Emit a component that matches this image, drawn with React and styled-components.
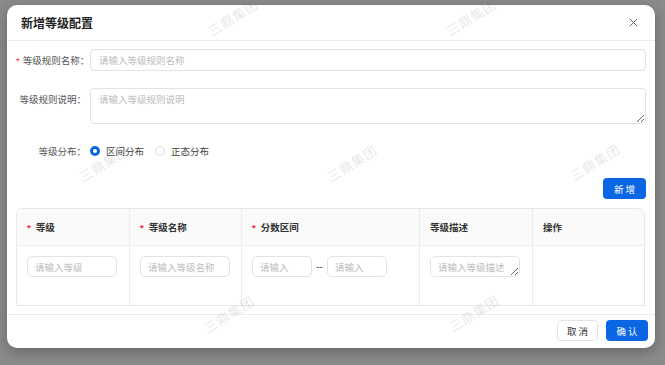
import React from 'react'
import styled, { createGlobalStyle } from 'styled-components'

const Global = createGlobalStyle`
  html, body {
    margin: 0;
    padding: 0;
    background: #8b8b8b;
  }
  * {
    box-sizing: border-box;
  }
  body {
    font-family: "Noto Sans CJK SC", "Noto Sans", sans-serif;
  }
`

const marks = [
  [226, 12], [464, 12],
  [97, 158], [345, 158], [588, 157],
  [222, 309], [467, 308],
]

const cols = [
  { w: 113, title: '等级', req: true },
  { w: 112, title: '等级名称', req: true },
  { w: 178, title: '分数区间', req: true },
  { w: 113, title: '等级描述' },
  { w: 113, title: '操作' },
]

export const App = () => {
  return (
    <>
      <Global />
      <Page>
        <Dialog>
          <Header>
            <Title>新增等级配置</Title>
            <Close>
              <svg width="9" height="9" viewBox="0 0 10 10">
                <path d="M1 1L9 9M9 1L1 9" stroke="#666" strokeWidth="1.1" />
              </svg>
            </Close>
          </Header>

          <Body>
            <Row>
              <Label><Star>*</Star>等级规则名称：</Label>
              <Input placeholder="请输入等级规则名称" />
            </Row>
            <Row>
              <Label>等级规则说明：</Label>
              <Area placeholder="请输入等级规则说明" />
            </Row>
            <Row $center>
              <Label>等级分布：</Label>
              <Radios>
                <RadioItem>
                  <Dot $on />
                  区间分布
                </RadioItem>
                <RadioItem>
                  <Dot />
                  正态分布
                </RadioItem>
              </Radios>
            </Row>

            <AddBar>
              <Primary $w={43}>新 增</Primary>
            </AddBar>

            <Table>
              <HeadRow>
                {cols.map((c, i) => (
                  <HeadCell key={i} $w={c.w} $last={i === cols.length - 1}>
                    {c.req && <Star $gap={5}>*</Star>}
                    {c.title}
                  </HeadCell>
                ))}
              </HeadRow>
              <BodyRow>
                <Cell $w={113}>
                  <SmallInput $w={90} placeholder="请输入等级" />
                </Cell>
                <Cell $w={112}>
                  <SmallInput $w={90} placeholder="请输入等级名称" />
                </Cell>
                <Cell $w={178}>
                  <SmallInput $w={60} placeholder="请输入" />
                  <Dash>--</Dash>
                  <SmallInput $w={60} placeholder="请输入" />
                </Cell>
                <Cell $w={113}>
                  <SmallArea placeholder="请输入等级描述" />
                </Cell>
                <Cell $w={113} $last />
              </BodyRow>
            </Table>
          </Body>

          <Footer>
            <Ghost>取 消</Ghost>
            <Primary $w={42}>确 认</Primary>
          </Footer>

          <Marks>
            {marks.map(([x, y], i) => (
              <Mark key={i} style={{ left: x, top: y }}>三鼎集团</Mark>
            ))}
          </Marks>
        </Dialog>
      </Page>
    </>
  )
}

export default App

const Page = styled.div`
  width: 665px;
  height: 365px;
  padding: 5px 0 0 7px;
  overflow: hidden;
`

const Dialog = styled.div`
  position: relative;
  width: 648px;
  height: 343px;
  background: #fff;
  border-radius: 10px;
  box-shadow: 0 4px 14px rgba(0, 0, 0, 0.28);
  display: flex;
  flex-direction: column;
  overflow: hidden;
`

const Header = styled.div`
  height: 36px;
  flex: none;
  padding: 0 14px 0 14px;
  display: flex;
  align-items: center;
  justify-content: space-between;
  border-bottom: 1px solid #ececec;
`

const Title = styled.div`
  font-size: 12px;
  font-weight: 700;
  color: #222;
  line-height: 1;
`

const Close = styled.div`
  width: 12px;
  height: 12px;
  display: flex;
  align-items: center;
  justify-content: center;
  margin-right: 2px;
`

const Body = styled.div`
  flex: 1;
  padding: 8px 9px 0 9px;
  display: flex;
  flex-direction: column;
`

const Row = styled.div`
  display: flex;
  align-items: ${p => (p.$center ? 'center' : 'flex-start')};
  gap: 4px;
  margin-bottom: 16px;
  height: ${p => (p.$center ? '22px' : 'auto')};
`

const Label = styled.div`
  width: 70px;
  flex: none;
  text-align: right;
  font-size: 9.5px;
  line-height: 22px;
  color: #555;
  white-space: nowrap;
`

const Star = styled.span`
  color: #f5222d;
  margin-right: ${p => p.$gap || 3}px;
  font-family: "Liberation Sans", sans-serif;
`

const Input = styled.input`
  flex: 1;
  height: 22px;
  border: 1px solid #e3e3e3;
  border-radius: 4px;
  padding: 0 8px;
  font-size: 9.5px;
  font-family: inherit;
  outline: none;
  &::placeholder {
    color: #bcbcbc;
  }
`

const Area = styled.textarea`
  flex: 1;
  height: 36px;
  border: 1px solid #e3e3e3;
  border-radius: 4px;
  padding: 3px 8px;
  font-size: 9.5px;
  font-family: inherit;
  outline: none;
  &::placeholder {
    color: #bcbcbc;
  }
`

const Radios = styled.div`
  display: flex;
  align-items: center;
  gap: 11px;
  font-size: 9.5px;
  color: #444;
`

const RadioItem = styled.label`
  display: flex;
  align-items: center;
  gap: 6px;
`

const Dot = styled.span`
  width: 10px;
  height: 10px;
  border-radius: 50%;
  background: #fff;
  border: ${p => (p.$on ? '3px solid #0a66e3' : '1px solid #dcdcdc')};
`

const AddBar = styled.div`
  display: flex;
  justify-content: flex-end;
  margin: 0 0 9px 0;
  padding-top: 0;
`

const Primary = styled.button`
  width: ${p => p.$w}px;
  height: 21px;
  border: none;
  border-radius: 4px;
  background: #0a66e3;
  color: #fff;
  font-size: 9.5px;
  font-family: inherit;
  padding: 0;
  display: flex;
  align-items: center;
  justify-content: center;
`

const Ghost = styled(Primary).attrs({ $w: 41 })`
  background: #fff;
  color: #333;
  border: 1px solid #e3e3e3;
`

const Table = styled.div`
  width: 629px;
  border: 1px solid #e8e8e8;
  border-radius: 6px 6px 0 0;
  overflow: hidden;
`

const HeadRow = styled.div`
  display: flex;
  height: 37px;
  background: #fafafa;
  border-bottom: 1px solid #ececec;
`

const HeadCell = styled.div`
  width: ${p => p.$w}px;
  flex: none;
  display: flex;
  align-items: center;
  padding-left: 10px;
  font-size: 9.5px;
  font-weight: 700;
  color: #333;
  border-right: ${p => (p.$last ? 'none' : '1px solid #ececec')};
`

const BodyRow = styled.div`
  display: flex;
  height: 59px;
`

const Cell = styled.div`
  width: ${p => p.$w}px;
  flex: none;
  display: flex;
  align-items: flex-start;
  padding: 10px 0 0 10px;
  border-right: ${p => (p.$last ? 'none' : '1px solid #ececec')};
`

const SmallInput = styled(Input)`
  flex: none;
  width: ${p => p.$w}px;
  height: 21px;
  border-radius: 5px;
  padding: 0 7px;
`

const SmallArea = styled(Area)`
  flex: none;
  width: 90px;
  height: 21px;
  border-radius: 5px;
  padding: 3px 7px;
  resize: vertical;
`

const Dash = styled.span`
  width: 15px;
  text-align: center;
  line-height: 21px;
  font-size: 10px;
  color: #555;
  font-family: "Liberation Sans", sans-serif;
`

const Footer = styled.div`
  flex: none;
  height: 34px;
  border-top: 1px solid #ececec;
  display: flex;
  justify-content: flex-end;
  align-items: flex-start;
  gap: 8px;
  padding: 5px 7px 0 0;
`

const Marks = styled.div`
  position: absolute;
  inset: 0;
  pointer-events: none;
`

const Mark = styled.div`
  position: absolute;
  transform: translate(-50%, -50%) rotate(-32deg);
  font-size: 13px;
  color: rgba(0, 0, 0, 0.1);
  white-space: nowrap;
  letter-spacing: 1px;
`
